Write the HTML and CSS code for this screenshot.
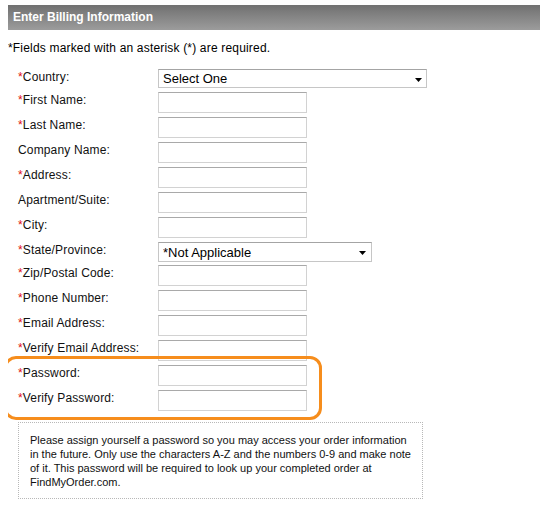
FILE: index.html
```html
<!DOCTYPE html>
<html lang="en">
<head>
<meta charset="utf-8">
<title>Enter Billing Information</title>
<link rel="stylesheet" href="styles.css">
</head>
<body>
<div class="header">Enter Billing Information</div>
<p class="note">*Fields marked with an asterisk (*) are required.</p>
<form class="form">
  <div class="row sel">
    <label class="label"><span class="req">*</span>Country:</label>
    <span class="select-wrap">
      <select class="select country"><option>Select One</option></select>
      <svg class="arrow" width="7" height="4" viewBox="0 0 7 4"><polygon points="0,0 7,0 3.5,4" fill="#000"/></svg>
    </span>
  </div>
  <div class="row"><label class="label"><span class="req">*</span>First Name:</label><input class="input" type="text"></div>
  <div class="row"><label class="label"><span class="req">*</span>Last Name:</label><input class="input" type="text"></div>
  <div class="row"><label class="label">Company Name:</label><input class="input" type="text"></div>
  <div class="row"><label class="label"><span class="req">*</span>Address:</label><input class="input" type="text"></div>
  <div class="row"><label class="label">Apartment/Suite:</label><input class="input" type="text"></div>
  <div class="row"><label class="label"><span class="req">*</span>City:</label><input class="input" type="text"></div>
  <div class="row sel">
    <label class="label"><span class="req">*</span>State/Province:</label>
    <span class="select-wrap">
      <select class="select state"><option>*Not Applicable</option></select>
      <svg class="arrow" width="7" height="4" viewBox="0 0 7 4"><polygon points="0,0 7,0 3.5,4" fill="#000"/></svg>
    </span>
  </div>
  <div class="row"><label class="label"><span class="req">*</span>Zip/Postal Code:</label><input class="input" type="text"></div>
  <div class="row"><label class="label"><span class="req">*</span>Phone Number:</label><input class="input" type="text"></div>
  <div class="row"><label class="label"><span class="req">*</span>Email Address:</label><input class="input" type="text"></div>
  <div class="row"><label class="label"><span class="req">*</span>Verify Email Address:</label><input class="input" type="text"></div>
  <div class="highlight">
    <div class="row"><label class="label"><span class="req">*</span>Password:</label><input class="input" type="password"></div>
    <div class="row"><label class="label"><span class="req">*</span>Verify Password:</label><input class="input" type="password"></div>
  </div>
  <div class="notice">Please assign yourself a password so you may access your order information<br>in the future. Only use the characters A-Z and the numbers 0-9 and make note<br>of it. This password will be required to look up your completed order at<br>FindMyOrder.com.</div>
</form>
</body>
</html>
```
FILE: styles.css
```css
body {
  margin: 5px 7px 0 8px;
  font-family: "Liberation Sans", Arial, sans-serif;
  font-size: 12px;
  color: #000;
  background: #fff;
}

.header {
  height: 25px;
  line-height: 25px;
  padding-left: 5px;
  background: linear-gradient(#707070, #9c9c9c);
  color: #fff;
  font-weight: bold;
  font-size: 12px;
}

.note {
  margin: 11px 0 0;
  line-height: 14px;
  letter-spacing: 0.18px;
}

.form {
  margin: 14px 0 0;
  padding-left: 10px;
}

.row {
  display: flex;
  align-items: flex-start;
  height: 25px;
}

.row.sel {
  height: 23px;
}

.label {
  width: 140px;
  flex: none;
  line-height: 14px;
  padding-top: 1px;
  color: #111;
  letter-spacing: 0.15px;
}

.req {
  color: #e01010;
}

.input {
  box-sizing: border-box;
  width: 149px;
  height: 21px;
  margin: 0;
  padding: 0 3px;
  border: 1px solid #d2d2d2;
  border-top-color: #a9a9a9;
  background: #fff;
  font: 12px "Liberation Sans", Arial, sans-serif;
}

.select-wrap {
  position: relative;
  display: inline-block;
}

.select {
  appearance: none;
  -webkit-appearance: none;
  box-sizing: border-box;
  display: block;
  margin: 0;
  padding: 0 0 0 4px;
  border: 1px solid #c6c6c6;
  border-top-color: #a4a4a4;
  border-radius: 0;
  background: #fff;
  color: #000;
  font: 13px "Liberation Sans", Arial, sans-serif;
}

.select.country {
  width: 269px;
  height: 19px;
}

.select.state {
  width: 214px;
  height: 20px;
}

.arrow {
  position: absolute;
  top: 9px;
  right: 5px;
  pointer-events: none;
}

.select-wrap:has(.state) .arrow {
  right: 6px;
}

.highlight {
  position: relative;
  box-sizing: border-box;
  width: 318px;
  margin: -9px 0 0 -14px;
  padding: 6px 0 2px 11px;
  border: 3px solid #f68d1c;
  border-radius: 12px;
}

.notice {
  box-sizing: border-box;
  width: 405px;
  margin-top: 2px;
  padding: 10px 11px 9px;
  border: 1px dotted #b8b8b8;
  font-size: 11px;
  line-height: 14px;
  color: #111;
  white-space: nowrap;
}
```
